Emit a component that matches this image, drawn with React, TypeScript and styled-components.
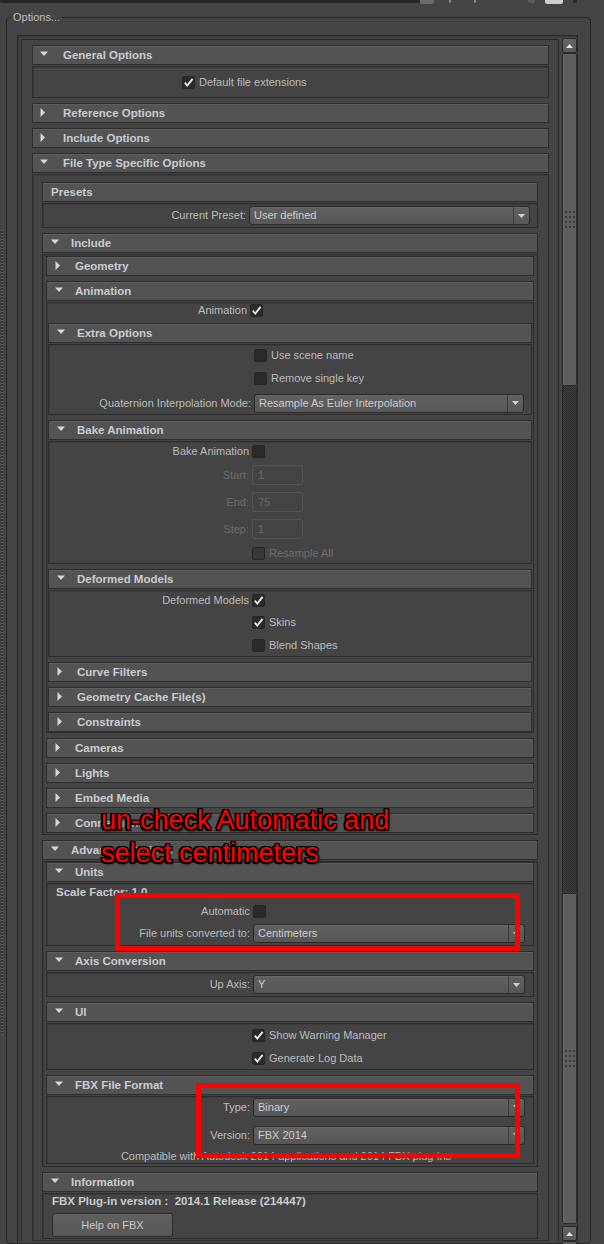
import React from "react";
import styled, { createGlobalStyle } from "styled-components";

const FONT = `"Liberation Sans", Arial, sans-serif`;

const GlobalStyle = createGlobalStyle`
  *, *::before, *::after { box-sizing: border-box; }
  html, body { margin: 0; padding: 0; background: #444444; }
  body { font-family: ${FONT}; font-size: 11px; color: #bcbcbc; }
`;

const Page = styled.div`
  position: relative;
  width: 604px;
  height: 1244px;
  overflow: hidden;
  background: #444444;
  display: flex;
  flex-direction: column;
`;

const TopStrip = styled.div`
  display: flex;
  align-items: flex-start;
  height: 4px;
  flex: none;
`;

const StripPiece = styled.div<{ $w: number; $ml?: number; $h?: number; $c: string }>`
  flex: none;
  width: ${(p) => p.$w}px;
  height: ${(p) => p.$h ?? 4}px;
  margin-left: ${(p) => p.$ml ?? 0}px;
  background: ${(p) => p.$c};
  border-radius: 0 0 2px 2px;
`;

const Main = styled.div`
  display: flex;
  margin-top: 7px;
  flex: 1;
  min-height: 0;
`;

const Gutter = styled.div`
  width: 6px;
  flex: none;
  display: flex;
  flex-direction: column;
`;

const Stipple = styled.div`
  margin-top: 219px;
  margin-left: 1px;
  width: 2px;
  height: 805px;
  background: repeating-linear-gradient(to bottom, #606060 0 1px, #363636 1px 3px);
`;

const GroupBox = styled.fieldset`
  flex: 1;
  min-width: 0;
  margin: 0 13px 0 0;
  padding: 11px 12px 0 10px;
  border: 1px solid #282828;
  border-radius: 4px;
`;

const Legend = styled.legend`
  margin-left: -6px;
  padding: 0 2px;
  font-size: 11px;
  line-height: 13px;
  height: 13px;
  color: #bcbcbc;
`;

const ScrollFrame = styled.div`
  display: flex;
  align-items: flex-start;
  gap: 3px;
  padding: 3px 0 0 3px;
  border: 1px solid #2a2a2a;
  border-bottom: none;
  box-shadow: inset 1px 1px 0 #3a3a3a;
`;

const Viewport = styled.div`
  flex: 1;
  min-width: 0;
  border: 1px solid #2a2a2a;
  border-bottom: none;
  padding: 5px 9px 0 10px;
  display: flex;
  flex-direction: column;
  gap: 5px;
`;

/* ---------- scrollbar drawing ---------- */
const Scrollbar = styled.div`
  width: 15px;
  flex: none;
  margin-top: -1px;
  display: flex;
  flex-direction: column;
`;

const SBButton = styled.div<{ $mt?: number }>`
  height: 15px;
  flex: none;
  margin-top: ${(p) => p.$mt ?? 0}px;
  border: 1px solid #2a2a2a;
  border-radius: 2px;
  background: linear-gradient(#656565, #585858);
  display: flex;
  align-items: center;
  justify-content: center;
`;

const SBThumb = styled.div<{ $h: number }>`
  height: ${(p) => p.$h}px;
  flex: none;
  border: 1px solid #2b2b2b;
  border-radius: 2px;
  background: #5e5e5e;
  box-shadow: inset 1px 0 0 #666;
  display: flex;
  align-items: center;
  justify-content: center;
`;

const SBTrough = styled.div<{ $h: number }>`
  height: ${(p) => p.$h}px;
  flex: none;
  border-left: 1px solid #2a2a2a;
  border-right: 1px solid #2a2a2a;
  background: repeating-conic-gradient(#2e2e2e 0% 25%, #3c3c3c 0% 50%) 0 0 / 2px 2px;
`;

const Grip = styled.div`
  display: grid;
  grid-template-columns: repeat(3, 2px);
  grid-auto-rows: 2px;
  column-gap: 2px;
  row-gap: 3px;
`;

const GripDot = styled.span`
  background: #3a3a3a;
`;

const GripDots = () => (
  <Grip>
    {Array.from({ length: 12 }).map((_, i) => (
      <GripDot key={i} />
    ))}
  </Grip>
);

const UpArrow = () => (
  <svg width="7" height="4" viewBox="0 0 7 4">
    <path d="M0 4 L3.5 0 L7 4 Z" fill="#e6e6e6" />
  </svg>
);

/* ---------- frames ---------- */
const FrameWrap = styled.section`
  display: flex;
  flex-direction: column;
  flex: none;
`;

const Header = styled.div<{ $top?: boolean; $plain?: boolean }>`
  height: 20px;
  flex: none;
  display: flex;
  align-items: center;
  padding-left: ${(p) => (p.$top && !p.$plain ? 7 : 8)}px;
  background: #535353;
  border: 1px solid #2d2d2d;
  box-shadow: inset 0 1px 0 #5e5e5e;
  font-weight: bold;
  font-size: 11.5px;
  color: #c8ccd1;
  white-space: nowrap;
  overflow: hidden;
`;

const CaretBox = styled.span<{ $top?: boolean; $open?: boolean }>`
  width: 9px;
  flex: none;
  display: flex;
  align-items: center;
  margin-right: ${(p) => (p.$top ? 14 : 11)}px;
  margin-top: ${(p) => (p.$open ? -2 : -1)}px;
`;

const Caret = ({ open }: { open?: boolean }) =>
  open ? (
    <svg width="9" height="6" viewBox="0 0 9 6">
      <path d="M0 0.5 H8 L4 5 Z" fill="#d6d6d6" />
    </svg>
  ) : (
    <svg width="9" height="9" viewBox="0 0 9 9">
      <path d="M0.5 0 V9 L5 4.5 Z" fill="#d6d6d6" />
    </svg>
  );

const Body = styled.div<{ $pad?: string; $gap?: number; $lw?: number }>`
  margin-top: 1px;
  border: 1px solid #2c2c2c;
  box-shadow: inset 1px 1px 0 #3c3c3c;
  padding: ${(p) => p.$pad ?? "0"};
  display: flex;
  flex-direction: column;
  gap: ${(p) => p.$gap ?? 0}px;
  ${(p) => (p.$lw !== undefined ? `--lw: ${p.$lw}px;` : "")}
`;

type FrameProps = {
  title: string;
  open?: boolean;
  top?: boolean;
  plain?: boolean;
  children?: React.ReactNode;
};

const Frame = ({ title, open, top, plain, children }: FrameProps) => (
  <FrameWrap>
    <Header $top={top} $plain={plain}>
      {!plain && (
        <CaretBox $top={top} $open={open}>
          <Caret open={open} />
        </CaretBox>
      )}
      {title}
    </Header>
    {open ? children : null}
  </FrameWrap>
);

/* ---------- form parts ---------- */
const Row = styled.div<{ $h: number; $mt?: number }>`
  display: grid;
  grid-template-columns: var(--lw) minmax(0, 1fr);
  column-gap: 3px;
  align-items: center;
  height: ${(p) => p.$h}px;
  margin-top: ${(p) => p.$mt ?? 0}px;
  flex: none;
`;

const Label = styled.span<{ $dim?: boolean }>`
  text-align: right;
  white-space: nowrap;
  line-height: 13px;
  color: ${(p) => (p.$dim ? "#6c6c6c" : "#bcbcbc")};
`;

const Select = styled.div`
  height: 19px;
  display: flex;
  align-items: stretch;
  border: 1px solid #2a2a2a;
  border-radius: 3px;
  background: linear-gradient(#606060, #575757);
  box-shadow: inset 0 1px 0 #676767;
  color: #cdcdcd;
`;

const SelectText = styled.span`
  flex: 1;
  min-width: 0;
  padding-left: 4px;
  line-height: 17px;
  white-space: nowrap;
  overflow: hidden;
`;

const SelectArrow = styled.span`
  width: 16px;
  flex: none;
  border-left: 1px solid #3d3d3d;
  display: flex;
  align-items: center;
  justify-content: center;
`;

const Dropdown = ({ value }: { value: string }) => (
  <Select>
    <SelectText>{value}</SelectText>
    <SelectArrow>
      <svg width="7" height="4" viewBox="0 0 7 4">
        <path d="M0 0 H7 L3.5 4 Z" fill="#d2d2d2" />
      </svg>
    </SelectArrow>
  </Select>
);

const Box = styled.span<{ $dim?: boolean }>`
  width: 13px;
  height: 13px;
  flex: none;
  border-radius: 2px;
  background: ${(p) => (p.$dim ? "#373737" : "#2a2a2a")};
  border: 1px solid #262626;
  display: flex;
  align-items: center;
  justify-content: center;
`;

const CheckBox = ({ checked, dim }: { checked?: boolean; dim?: boolean }) => (
  <Box $dim={dim}>
    {checked && (
      <svg width="11" height="11" viewBox="0 0 11 11">
        <path d="M1.8 5.6 L4.3 8.6 L9.6 1.8" fill="none" stroke="#e9e9e9" strokeWidth="1.9" />
      </svg>
    )}
  </Box>
);

const CheckItemWrap = styled.span<{ $dim?: boolean }>`
  display: inline-flex;
  align-items: center;
  gap: 4px;
  white-space: nowrap;
  line-height: 13px;
  color: ${(p) => (p.$dim ? "#6c6c6c" : "#bcbcbc")};
`;

const CheckItem = ({ checked, dim, children }: { checked?: boolean; dim?: boolean; children: React.ReactNode }) => (
  <CheckItemWrap $dim={dim}>
    <CheckBox checked={checked} dim={dim} />
    {children}
  </CheckItemWrap>
);

const NumField = styled.span`
  width: 51px;
  height: 20px;
  border: 1px solid #535353;
  border-radius: 2px;
  padding-left: 5px;
  line-height: 18px;
  color: #686868;
`;

const SubTitle = styled.div`
  height: 16px;
  flex: none;
  padding-left: 9px;
  font-weight: bold;
  font-size: 11.5px;
  line-height: 16px;
  color: #c8ccd1;
  white-space: nowrap;
`;

const Note = styled.div`
  margin-top: 4px;
  height: 14px;
  flex: none;
  line-height: 14px;
  text-align: center;
  white-space: nowrap;
  color: #bcbcbc;
`;

const InfoLine = styled.div`
  height: 14px;
  flex: none;
  font-weight: bold;
  font-size: 11.5px;
  line-height: 14px;
  color: #c8ccd1;
  white-space: pre;
`;

const HelpButton = styled.button`
  margin-top: 5px;
  width: 121px;
  height: 24px;
  flex: none;
  padding: 0;
  border: 1px solid #2c2c2c;
  border-radius: 3px;
  background: linear-gradient(#5f5f5f, #575757);
  box-shadow: inset 0 1px 0 #676767;
  color: #c8c8c8;
  font: 11px ${FONT};
`;

/* ---------- overlays ---------- */
const Annotation = styled.div`
  position: absolute;
  left: 101px;
  top: 804px;
  font-family: ${FONT};
  font-size: 27px;
  line-height: 33px;
  color: #ff0000;
  white-space: nowrap;
  pointer-events: none;
  text-shadow: -1.5px -1.5px 0 #000, 1.5px -1.5px 0 #000, -1.5px 1.5px 0 #000, 1.5px 1.5px 0 #000,
    0 -1.5px 0 #000, 0 1.5px 0 #000, -1.5px 0 0 #000, 1.5px 0 0 #000, 1px 2px 3px #000;
`;

const RedBox = styled.div<{ $x: number; $y: number; $w: number; $h: number }>`
  position: absolute;
  left: ${(p) => p.$x}px;
  top: ${(p) => p.$y}px;
  width: ${(p) => p.$w}px;
  height: ${(p) => p.$h}px;
  border: 5px solid #ff0000;
  pointer-events: none;
`;

const Empty = styled.span``;

export default function App() {
  return (
    <Page>
      <GlobalStyle />
      <TopStrip>
        <StripPiece $w={420} $h={3} $c="#262626" />
        <StripPiece $w={14} $h={4} $c="#6b6b6b" />
        <StripPiece $w={2} $ml={15} $h={3} $c="#8a8a8a" />
        <StripPiece $w={2} $ml={23} $h={3} $c="#8a8a8a" />
        <StripPiece $w={7} $ml={52} $h={3} $c="#5c5c5c" />
        <StripPiece $w={18} $ml={10} $h={4} $c="#cfcfcf" />
        <StripPiece $w={4} $ml={10} $h={3} $c="#2a2a2a" />
      </TopStrip>
      <Main>
        <Gutter>
          <Stipple />
        </Gutter>
        <GroupBox>
          <Legend>Options...</Legend>
          <ScrollFrame>
            <Viewport>
              <Frame top open title="General Options">
                <Body $lw={146}>
                  <Row $h={30}>
                    <Empty />
                    <CheckItem checked>Default file extensions</CheckItem>
                  </Row>
                </Body>
              </Frame>
              <Frame top title="Reference Options" />
              <Frame top title="Include Options" />
              <Frame top open title="File Type Specific Options">
                <Body $pad="7px 10px 1px 9px" $gap={5}>
                  <Frame plain open title="Presets">
                    <Body $lw={203} $pad="0 7px 0 0">
                      <Row $h={23}>
                        <Label>Current Preset:</Label>
                        <Dropdown value="User defined" />
                      </Row>
                    </Body>
                  </Frame>

                  <Frame open title="Include">
                    <Body $pad="1px 3px 1px 3px" $gap={5}>
                      <Frame title="Geometry" />
                      <Frame open title="Animation">
                        <Body $pad="0 1px" $gap={5} $lw={199}>
                          <Row $h={15}>
                            <Label>Animation</Label>
                            <CheckBox checked />
                          </Row>
                          <Frame open title="Extra Options">
                            <Body $lw={202} $pad="0 7px 0 0" $gap={3}>
                              <Row $h={20}>
                                <Empty />
                                <CheckItem>Use scene name</CheckItem>
                              </Row>
                              <Row $h={21}>
                                <Empty />
                                <CheckItem>Remove single key</CheckItem>
                              </Row>
                              <Row $h={22}>
                                <Label>Quaternion Interpolation Mode:</Label>
                                <Dropdown value="Resample As Euler Interpolation" />
                              </Row>
                            </Body>
                          </Frame>
                          <Frame open title="Bake Animation">
                            <Body $lw={200} $gap={1}>
                              <Row $h={19}>
                                <Label>Bake Animation</Label>
                                <CheckBox />
                              </Row>
                              <Row $h={26}>
                                <Label $dim>Start:</Label>
                                <NumField>1</NumField>
                              </Row>
                              <Row $h={26}>
                                <Label $dim>End:</Label>
                                <NumField>75</NumField>
                              </Row>
                              <Row $h={26}>
                                <Label $dim>Step:</Label>
                                <NumField>1</NumField>
                              </Row>
                              <Row $h={20}>
                                <Empty />
                                <CheckItem dim>Resample All</CheckItem>
                              </Row>
                            </Body>
                          </Frame>
                          <Frame open title="Deformed Models">
                            <Body $lw={200} $gap={3}>
                              <Row $h={19}>
                                <Label>Deformed Models</Label>
                                <CheckBox checked />
                              </Row>
                              <Row $h={19}>
                                <Empty />
                                <CheckItem checked>Skins</CheckItem>
                              </Row>
                              <Row $h={21}>
                                <Empty />
                                <CheckItem>Blend Shapes</CheckItem>
                              </Row>
                            </Body>
                          </Frame>
                          <Frame title="Curve Filters" />
                          <Frame title="Geometry Cache File(s)" />
                          <Frame title="Constraints" />
                        </Body>
                      </Frame>
                      <Frame title="Cameras" />
                      <Frame title="Lights" />
                      <Frame title="Embed Media" />
                      <Frame title="Connections" />
                    </Body>
                  </Frame>

                  <Frame open title="Advanced Options">
                    <Body $pad="0 3px 2px 3px" $gap={5}>
                      <Frame open title="Units">
                        <Body $lw={203} $pad="0 8px 0 0" $gap={1}>
                          <SubTitle>Scale Factor: 1.0</SubTitle>
                          <Row $h={20}>
                            <Label>Automatic</Label>
                            <CheckBox />
                          </Row>
                          <Row $h={23}>
                            <Label>File units converted to:</Label>
                            <Dropdown value="Centimeters" />
                          </Row>
                        </Body>
                      </Frame>
                      <Frame open title="Axis Conversion">
                        <Body $lw={203} $pad="0 8px 0 0">
                          <Row $h={23}>
                            <Label>Up Axis:</Label>
                            <Dropdown value="Y" />
                          </Row>
                        </Body>
                      </Frame>
                      <Frame open title="UI">
                        <Body $lw={202} $gap={1}>
                          <Row $h={22}>
                            <Empty />
                            <CheckItem checked>Show Warning Manager</CheckItem>
                          </Row>
                          <Row $h={22}>
                            <Empty />
                            <CheckItem checked>Generate Log Data</CheckItem>
                          </Row>
                        </Body>
                      </Frame>
                      <Frame open title="FBX File Format">
                        <Body $lw={203} $pad="0 8px 0 0">
                          <Row $h={20}>
                            <Label>Type:</Label>
                            <Dropdown value="Binary" />
                          </Row>
                          <Row $h={20} $mt={8}>
                            <Label>Version:</Label>
                            <Dropdown value="FBX 2014" />
                          </Row>
                          <Note>Compatible with Autodesk 2014 applications and 2014 FBX plug-ins</Note>
                        </Body>
                      </Frame>
                    </Body>
                  </Frame>

                  <Frame open title="Information">
                    <Body $pad="0 0 1px 9px">
                      <InfoLine>{"FBX Plug-in version :  2014.1 Release (214447)"}</InfoLine>
                      <HelpButton>Help on FBX</HelpButton>
                    </Body>
                  </Frame>
                </Body>
              </Frame>
            </Viewport>
            <Scrollbar>
              <SBButton>
                <UpArrow />
              </SBButton>
              <SBThumb $h={333}>
                <GripDots />
              </SBThumb>
              <SBTrough $h={507} />
              <SBThumb $h={331}>
                <GripDots />
              </SBThumb>
              <SBButton $mt={2}>
                <UpArrow />
              </SBButton>
              <SBThumb $h={40} />
            </Scrollbar>
          </ScrollFrame>
        </GroupBox>
      </Main>

      <Annotation>
        un-check Automatic and
        <br />
        select centimeters
      </Annotation>
      <RedBox $x={115} $y={893} $w={405} $h={58} />
      <RedBox $x={196} $y={1083} $w={324} $h={75} />
    </Page>
  );
}
